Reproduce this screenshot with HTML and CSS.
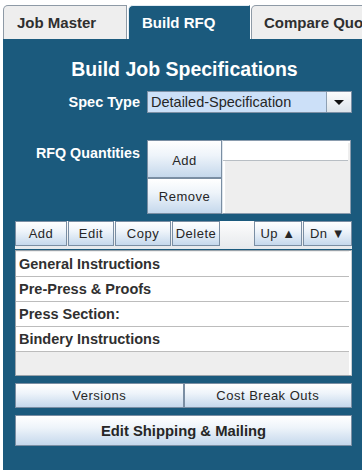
FILE: index.html
```html
<!DOCTYPE html>
<html>
<head>
<meta charset="utf-8">
<link rel="stylesheet" href="styles.css">
</head>
<body>
<div class="window">
  <div class="tabs">
    <div class="tab">Job Master</div>
    <div class="tab active">Build RFQ</div>
    <div class="tab wide">Compare Quotes</div>
  </div>
  <div class="panel">
    <div class="title">Build Job Specifications</div>
    <div class="form-row spec">
      <div class="label">Spec Type</div>
      <div class="combo">
        <div class="combo-value">Detailed-Specification</div>
        <div class="combo-arrow">
          <svg width="10" height="6" viewBox="0 0 10 6"><polygon points="0,0 10,0 5,5" fill="#111"/></svg>
        </div>
      </div>
    </div>
    <div class="form-row rfq">
      <div class="label top">RFQ Quantities</div>
      <div class="rfq-body">
        <div class="rfq-buttons">
          <div class="btn tall">Add</div>
          <div class="btn tall2">Remove</div>
        </div>
        <div class="qty-list">
          <div class="qty-entry"></div>
        </div>
      </div>
    </div>
    <div class="toolbar">
      <div class="btn tb w-add">Add</div>
      <div class="btn tb w-edit">Edit</div>
      <div class="btn tb w-copy">Copy</div>
      <div class="btn tb w-del">Delete</div>
      <div class="spacer"></div>
      <div class="btn tb w-up">Up ▲</div>
      <div class="btn tb w-dn">Dn ▼</div>
    </div>
    <div class="spec-list">
      <div class="spec-item">General Instructions</div>
      <div class="spec-item">Pre-Press &amp; Proofs</div>
      <div class="spec-item">Press Section:</div>
      <div class="spec-item">Bindery Instructions</div>
    </div>
    <div class="pair">
      <div class="btn half">Versions</div>
      <div class="btn half">Cost Break Outs</div>
    </div>
    <div class="btn big">Edit Shipping &amp; Mailing</div>
  </div>
</div>
</body>
</html>
```
FILE: styles.css
```css
* { box-sizing: border-box; }
html, body {
  margin: 0;
  padding: 0;
  background: #ffffff;
  font-family: "Liberation Sans", Arial, sans-serif;
}
.window {
  width: 362px;
  height: 470px;
  padding: 5px 0 0 3px;
  overflow: hidden;
  display: flex;
  flex-direction: column;
}
.tabs {
  display: flex;
  gap: 1px;
  height: 34px;
  flex: none;
  overflow: hidden;
  white-space: nowrap;
}
.tab {
  width: 124px;
  flex: none;
  background: #eeeeee;
  border: 1px solid #8e9aa6;
  border-bottom: none;
  border-top-left-radius: 5px;
  padding: 8px 0 0 13px;
  font-weight: bold;
  font-size: 15px;
  color: #2f2f2f;
}
.tab.active {
  width: 122px;
  background: #1b5a7d;
  border-color: #e3ecf3;
  border-right-color: #1b5a7d;
  color: #ffffff;
}
.tab.wide {
  width: 150px;
  padding-left: 12px;
}
.panel {
  flex: 1;
  background: #1b5a7d;
  padding: 19px 10px 0 12px;
  display: flex;
  flex-direction: column;
}
.title {
  text-align: center;
  color: #ffffff;
  font-weight: bold;
  font-size: 19.5px;
  line-height: 22px;
  height: 22px;
  padding-left: 2px;
}
.form-row {
  display: grid;
  grid-template-columns: 125px 1fr;
  column-gap: 7px;
}
.spec {
  margin-top: 11px;
  align-items: center;
}
.label {
  color: #ffffff;
  font-weight: bold;
  font-size: 14.5px;
  text-align: right;
}
.label.top {
  padding-top: 5px;
  font-size: 14.3px;
}
.combo {
  height: 22px;
  display: flex;
  border: 1px solid #7d90a5;
  background: #cce0f8;
}
.combo-value {
  flex: 1;
  font-size: 14.5px;
  line-height: 20px;
  padding-left: 3px;
  color: #262626;
}
.combo-arrow {
  width: 25px;
  border-left: 1px solid #8ea0b3;
  background: linear-gradient(#fbfcfd, #dde4ea);
  display: flex;
  align-items: center;
  justify-content: center;
  padding-top: 1px;
}
.rfq {
  margin-top: 27px;
}
.rfq-body {
  display: flex;
  height: 74px;
  margin-right: 1px;
}
.rfq-buttons {
  width: 75px;
  display: flex;
  flex-direction: column;
}
.btn {
  border: 1px solid #7a8ea3;
  background: linear-gradient(#ffffff 0%, #eef4fa 40%, #c5d8ec 100%);
  color: #262626;
  font-size: 13px;
  letter-spacing: 0.5px;
  display: flex;
  align-items: center;
  justify-content: center;
  white-space: nowrap;
}
.tall { height: 38px; padding-top: 2px; }
.tall2 { height: 36px; padding-top: 1px; }
.qty-list {
  flex: 1;
  border: 1px solid #8a9cae;
  border-left-color: #dfe6ec;
  background: #eeeeee;
  box-shadow: 2px 2px 0 #ffffff inset;
}
.qty-entry {
  height: 20px;
  background: #ffffff;
  border-bottom: 1px solid #b8bec4;
  margin-right: 2px;
}
.toolbar {
  margin-top: 7px;
  height: 28px;
  display: flex;
  align-items: flex-start;
  gap: 1px;
  background: linear-gradient(#fdfdfd, #e6e9ec);
}
.tb { height: 25px; }
.w-add { width: 52px; }
.w-edit { width: 46px; }
.w-copy { width: 56px; }
.w-del { width: 48px; }
.w-up { width: 48px; }
.w-dn { width: 49px; }
.spacer { flex: 1; }
.spec-list {
  margin-top: 1px;
  height: 126px;
  border: 1px solid #9aa3ab;
  border-right-color: #c9cfd4;
  background: #eeeeee;
  padding-top: 1px;
  box-shadow: inset -2px 0 0 #ffffff;
}
.spec-item {
  height: 25px;
  background: #ffffff;
  border-bottom: 1px solid #bcbcbc;
  margin-right: 2px;
  padding-left: 3px;
  font-weight: bold;
  font-size: 14.5px;
  line-height: 25px;
  color: #303030;
}
.pair {
  margin-top: 7px;
  display: flex;
  height: 25px;
}
.half {
  flex: 1;
}
.big {
  margin-top: 7px;
  height: 31px;
  font-weight: bold;
  font-size: 14.8px;
  letter-spacing: 0;
}
```
